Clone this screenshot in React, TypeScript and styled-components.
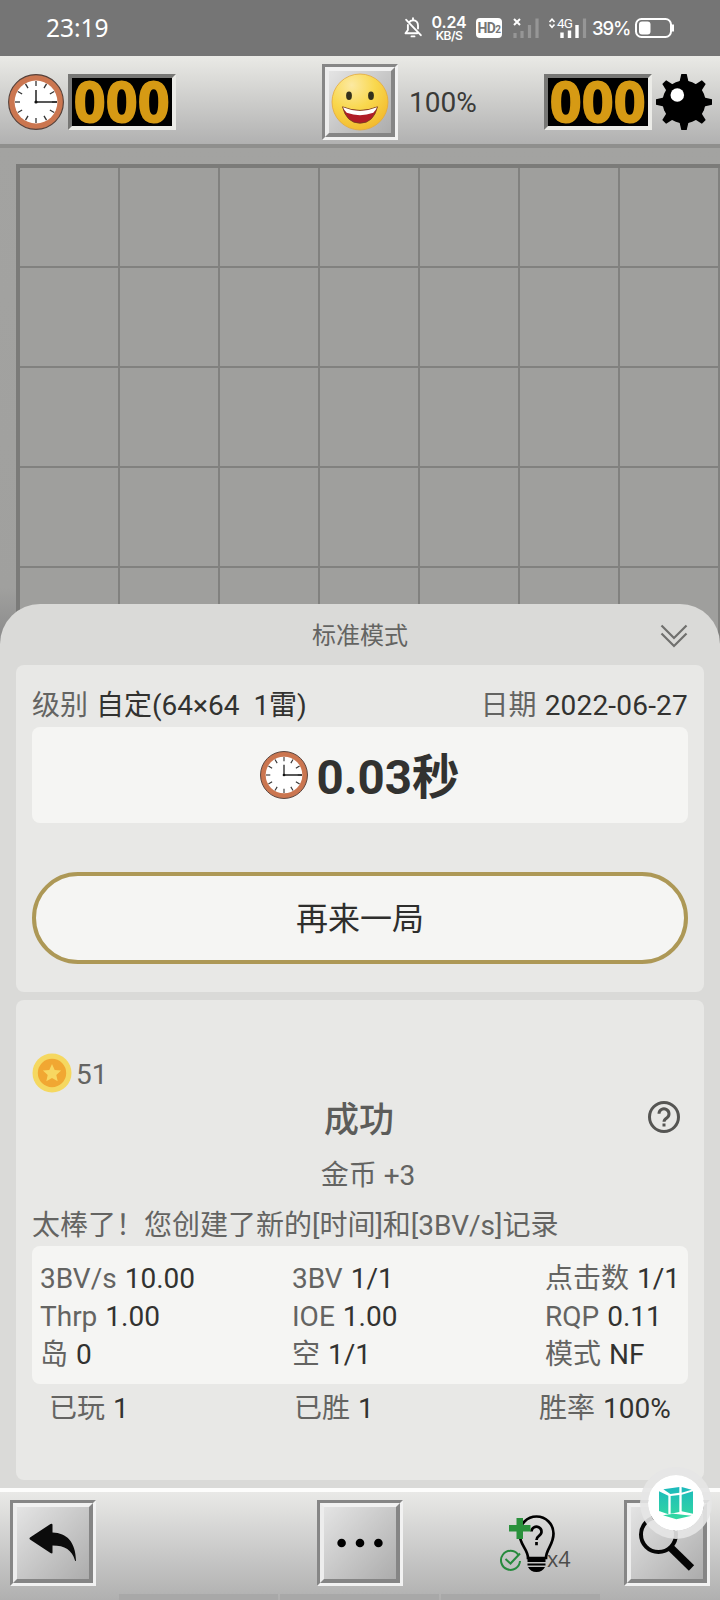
import React from 'react';
import styled, { createGlobalStyle } from 'styled-components';

const Global = createGlobalStyle`
  * { box-sizing: border-box; }
  body { margin: 0; background: #dadad8; }
`;

const Screen = styled.div`
  width: 720px; height: 1600px; overflow: hidden;
  display: flex; flex-direction: column;
  font-family: Roboto, "Noto Sans CJK SC", sans-serif;
  font-size: 28px; color: #323230;
`;

/* ---------- status bar ---------- */
const StatusBar = styled.header`
  height: 56px; flex: none; background: #757575; color: #fff;
  display: flex; align-items: center; padding: 0 45px 0 46px;
`;
const StatusClock = styled.span`
  flex: 1; font: 400 24.5px/56px "Noto Sans", sans-serif;
`;
const StatusIcons = styled.div`
  display: flex; align-items: center; height: 56px;
`;
const NetSpeed = styled.div`
  width: 36px; margin: 0 9px 0 9px; text-align: center; font-family: Inter, sans-serif; font-weight: 600;
  display: flex; flex-direction: column; gap: 1px;
`;
const SpeedValue = styled.div`
  font-size: 16px; line-height: 15px; height: 14px; letter-spacing: -0.2px;
`;
const SpeedUnit = styled.div`
  font-size: 12px; line-height: 12px; letter-spacing: -0.5px;
`;
const HdBadge = styled.div`
  width: 26px; height: 20px; border-radius: 4px; background: #fff; color: #757575;
  font: 700 14px/21px "Roboto", sans-serif; letter-spacing: -0.6px; text-align: center;
  margin-right: 11px;
  small { font-size: 10px; }
`;
const Percent = styled.span`
  font: 500 18.5px/54px Inter, sans-serif; letter-spacing: -1.1px; width: 37px; margin: 0 6px 0 5px;
`;

/* ---------- top game bar ---------- */
const GameBar = styled.div`
  height: 92px; flex: none; border-bottom: 4px solid #8f8f8d;
  background: linear-gradient(#eaeae6, #b1b1b1);
  display: grid; grid-template-columns: 1fr 76px 1fr; align-items: center; padding: 4px 8px 0;
`;
const BarSide = styled.div<{ $end?: boolean }>`
  display: flex; align-items: center; gap: 4px; height: 56px;
  justify-content: ${p => (p.$end ? 'space-between' : 'flex-start')};
`;
const CounterGroup = styled.div`
  display: flex; gap: 4px;
`;
const Led = styled.div`
  width: 108px; height: 56px; border: 4px solid; border-color: #777775 #ebebe7 #ebebe7 #777775;
  background: #000; color: #d69a14; text-align: center;
  font: 700 55px/45px "Noto Sans", sans-serif; letter-spacing: 0.5px;
  -webkit-text-stroke: 1.8px #d69a14;
`;
const Progress = styled.span`
  margin-left: 11px; line-height: 57px; color: #3a3a38;
`;

/* ---------- beveled button ---------- */
const BevelOuter = styled.button<{ $size: number }>`
  width: ${p => p.$size}px; height: ${p => p.$size}px; padding: 0; flex: none;
  border: 3px solid; border-color: #868686 #f2f2f2 #f2f2f2 #868686; background: none;
  display: flex;
`;
const BevelInner = styled.span`
  flex: 1; border: 4px solid; border-color: #f1f1f1 #858585 #858585 #ededed;
  background: linear-gradient(135deg, #e4e4e4, #acacac);
  display: flex; align-items: center; justify-content: center;
  svg { flex: none; }
`;

/* ---------- board and result sheet ---------- */
const Stage = styled.main`
  flex: 1; position: relative; overflow: hidden; padding: 16px 0 0 16px;
  background: linear-gradient(#a3a3a1 0, #a0a09e 440px, #8c8c8c 490px);
`;
const Board = styled.div`
  width: 704px; border: solid #7b7b79; border-width: 4px 0 0 4px;
  display: grid; grid-template-columns: repeat(7, 100px); grid-auto-rows: 100px;
`;
const Cell = styled.div`
  border: solid #81817f; border-width: 0 2px 2px 0; background: #9f9f9d;
`;
const Sheet = styled.section`
  position: absolute; left: 0; right: 0; top: 456px; bottom: 0;
  background: #dadad8; border-radius: 40px 40px 0 0; padding: 0 16px 8px;
  display: flex; flex-direction: column;
`;
const SheetHeader = styled.div`
  height: 61px; flex: none; display: grid; grid-template-columns: 1fr auto 1fr; align-items: center;
  font-size: 24px; line-height: 36px; color: #646462; padding: 2px 16px 0;
  svg { justify-self: end; }
`;
const Card = styled.div<{ $height: number; $top: number }>`
  height: ${p => p.$height}px; padding: ${p => p.$top}px 16px 0; border-radius: 8px; background: #e8e8e6;
  display: flex; flex-direction: column; flex: none;
  & + & { margin-top: 8px; }
`;
const InfoRow = styled.div`
  display: flex; justify-content: space-between; line-height: 41px; white-space: pre; padding-bottom: 1px;
`;
const DateText = styled.span`
  letter-spacing: 0.2px;
`;
const Label = styled.span`
  color: #646462; margin-right: 8px;
`;
const Panel = styled.div<{ $height: number }>`
  height: ${p => p.$height}px; flex: none; background: #f5f5f3; border-radius: 8px;
`;
const TimePanel = styled(Panel)`
  display: flex; align-items: center; justify-content: center; gap: 8px;
  font-size: 47.5px; font-weight: 700; line-height: 96px;
`;
const TimeText = styled.span`
  padding-top: 6px;
`;
const AgainButton = styled.button`
  height: 92px; margin-top: 49px; border: 4px solid #ad9856; border-radius: 46px;
  background: #f5f5f3; color: #2e2e2c; font: 32px/84px Roboto, "Noto Sans CJK SC", sans-serif; padding: 1px 0 0;
`;
const Coins = styled.div`
  display: flex; align-items: center; gap: 4px; height: 40px; color: #646462; line-height: 40px;
  span { padding-top: 3px; }
`;
const ResultRow = styled.div`
  height: 56px; display: grid; grid-template-columns: 1fr auto 1fr; align-items: center;
  color: #5c5c5a;
  svg { justify-self: end; margin: 0 8px 8px 0; }
`;
const ResultTitle = styled.h1`
  margin: 0 2px 0 0; font-size: 35px; font-weight: 500; line-height: 56px;
`;
const Reward = styled.div`
  text-align: center; line-height: 48px; padding: 3px 0 0 16px; color: #646462;
`;
const Message = styled.p`
  margin: 0; height: 46px; line-height: 52px; color: #646462; white-space: nowrap;
`;
const Stats = styled(Panel)`
  display: grid; grid-template-columns: 252px 253px 1fr; grid-auto-rows: 38px; line-height: 38px;
  padding: 14px 0 0 8px; white-space: nowrap;
`;
const Totals = styled.div`
  display: grid; grid-template-columns: 245px 245px 1fr; line-height: 50px; padding-left: 17px; white-space: nowrap;
`;

/* ---------- bottom bar ---------- */
const BottomBar = styled.footer`
  height: 112px; flex: none; border-top: 4px solid #fdfdfc; position: relative;
  background: linear-gradient(#e9e9e7, #b0b0b0); padding: 8px 10px 0;
  display: grid; grid-template-columns: 1fr 86px 1fr; align-items: start;
`;
const BottomEnd = styled.div`
  display: flex; justify-content: space-between; padding-left: 97px;
`;
const HintButton = styled.div`
  display: flex; align-items: flex-end; height: 73px; color: #4c4c4a;
`;
const HintCount = styled.span`
  font: 21.5px/29px "Open Sans", sans-serif; margin-left: -9px;
`;
const NavStrip = styled.div`
  position: absolute; left: 119px; bottom: 0; display: flex; gap: 2px;
  span { width: 159px; height: 6px; background: #a8a8a8; }
`;
const Bubble = styled.div`
  position: absolute; left: 640px; top: -25px; width: 72px; height: 72px; border-radius: 50%;
  border: 8px solid rgba(229, 229, 229, 0.9); background: #fff; background-clip: padding-box;
  display: flex; align-items: center; justify-content: center;
`;

const ClockIcon = ({ size }: { size: number }) => (
  <svg width={size} height={size} viewBox="0 0 56 56">
    <circle cx="28" cy="28" r="27.4" fill="#cb7650" stroke="#55413a" strokeWidth="1.1" />
    <circle cx="28" cy="28" r="21.4" fill="#fff" />
    {Array.from({ length: 12 }, (_, i) => (
      <path key={i} d="M28 7v5" stroke="#333" strokeWidth="1.3" transform={`rotate(${i * 30} 28 28)`} />
    ))}
    <path d="M28 28V16M28 28h21" stroke="#222" strokeWidth="1.5" />
    <circle cx="28" cy="28" r="1.6" fill="#111" />
  </svg>
);

const MineIcon = () => (
  <svg width="56" height="56" viewBox="0 0 56 56">
    <circle cx="28" cy="28" r="21.5" />
    {Array.from({ length: 8 }, (_, i) => (
      <path key={i} d="M25.3 0h5.4L33 10H23z" transform={`rotate(${i * 45} 28 28)`} />
    ))}
    <circle cx="21.3" cy="21" r="6.8" fill="#fff" />
  </svg>
);

const SmileIcon = () => (
  <svg width="58" height="58" viewBox="0 0 58 58">
    <defs>
      <radialGradient id="face" cx="0.35" cy="0.2" r="0.85">
        <stop offset="0" stopColor="#fce9a2" />
        <stop offset="0.5" stopColor="#f9d84e" />
        <stop offset="1" stopColor="#f2b92c" />
      </radialGradient>
    </defs>
    <circle cx="29" cy="29" r="28" fill="url(#face)" stroke="#e6a93a" strokeWidth="0.8" />
    <ellipse cx="18" cy="22.7" rx="2.9" ry="4.2" fill="#33301c" />
    <ellipse cx="40" cy="22.7" rx="2.9" ry="4.2" fill="#33301c" />
    <path d="M11.500 33.800Q29 41 46.500 33.800Q42.500 50.200 29 50.200T11.500 33.800Z" fill="#b01c26" stroke="#70401f" strokeWidth="0.8" />
    <path d="M12 34.300Q29 41.500 46 34.300Q44.800 37.500 42.300 39.800Q29 44.500 15.700 39.800Q13.200 37.500 12 34.300Z" fill="#fff" />
  </svg>
);

const MutedBell = () => (
  <svg width="18" height="22" viewBox="0 0 18 22" fill="none" stroke="#fff" strokeWidth="1.9" strokeLinecap="round" strokeLinejoin="round">
    <path d="M5 5.5C6 3.8 7.300 3.200 9 3.200c3 0 5 2.200 5 5.200v3.200M3.900 8v5L1.500 16.200h11.800M9 1.200v1.600M7.500 19.400h3M2.200 2.800L16.800 18.200" />
  </svg>
);

const WeakSignal = () => (
  <svg width="26" height="22" viewBox="0 0 26 22">
    <path d="M1 2l6 6M7 2L1 8" stroke="#fff" strokeWidth="2" />
    <path d="M2 16v5M9 14v7M16.500 8v13M24 1.500v19.500" stroke="#969696" strokeWidth="3.200" />
  </svg>
);

const FourG = styled.div`
  display: flex; position: relative; width: 39px; height: 22px; margin-left: 9px;
`;
const FourGText = styled.span`
  position: absolute; left: 9px; top: -1px; font: 400 13.5px/14px Roboto, sans-serif; letter-spacing: -0.8px;
`;

const DataSignal = () => (
  <FourG>
    <svg width="39" height="22" viewBox="0 0 39 22">
      <path d="M1.500 5L4 2.200 6.500 5M1.500 7.500L4 10.300 6.500 7.500" stroke="#fff" strokeWidth="1.600" fill="none" />
      <path d="M14 15.500v5.500M21.500 13.500v7.500M29 8v13" stroke="#fff" strokeWidth="3.400" />
      <path d="M36.500 1.500v19.500" stroke="#969696" strokeWidth="3.200" />
    </svg>
    <FourGText>4G</FourGText>
  </FourG>
);

const Battery = () => (
  <svg width="40" height="20" viewBox="0 0 40 20">
    <rect x="1" y="1" width="35" height="18" rx="5.500" fill="none" stroke="#fff" strokeWidth="2" />
    <rect x="4" y="3.500" width="11.500" height="13" rx="3" fill="#fff" />
    <path d="M38 6.500v7" stroke="#fff" strokeWidth="2" />
  </svg>
);

const CollapseIcon = () => (
  <svg width="28" height="24" viewBox="0 0 28 24" fill="none" stroke="#70706e" strokeWidth="2.200">
    <path d="M1.500 1.500L14 14 26.500 1.500M1.500 9.500L14 22 26.500 9.500" />
  </svg>
);

const CoinIcon = () => (
  <svg width="40" height="40" viewBox="0 0 40 40">
    <circle cx="20" cy="20" r="19.500" fill="#f5d860" />
    <circle cx="20" cy="20" r="14.200" fill="#f1a732" />
    <path d="M20 11l2.700 5.900 6.400.7-4.800 4.300 1.400 6.400L20 25l-5.700 3.300 1.400-6.400-4.800-4.300 6.400-.7z" fill="#f8d761" />
  </svg>
);

const HelpIcon = () => (
  <svg width="32" height="32" viewBox="0 0 32 32" fill="none" stroke="#555553" strokeWidth="3">
    <circle cx="16" cy="16" r="14.500" />
    <path d="M11 12.800a5 5 0 1 1 8 4c-2.200 1.500-3 2.200-3 4M16 22.500v3" />
  </svg>
);

const BackIcon = () => (
  <svg width="48" height="40" viewBox="0 0 48 40">
    <path d="M1 16.500Q0 15.500 1 14.500L21.500 1Q23.500 0 23.500 2V9.500C38 10 46.500 19 47 37.500Q46.500 38.500 46 37.500C43 27 36 22.500 23.500 22.500V29.500Q23.500 31 21.500 30Z" fill="#0b0b0b" />
  </svg>
);

const MoreIcon = () => (
  <svg width="46" height="10" viewBox="0 0 46 10">
    <circle cx="4.600" cy="5" r="4.300" /><circle cx="23" cy="5" r="4.300" /><circle cx="41.400" cy="5" r="4.300" />
  </svg>
);

const HintIcon = () => (
  <svg width="56" height="58" viewBox="0 0 56 58">
    <path d="M28 43C28 34 19.500 30 19.500 18.500A17 17 0 0 1 53.500 18.500C53.500 30 46 34 46 43Z" fill="none" stroke="#000" strokeWidth="2.700" />
    <path d="M31.500 16.500a5 4.800 0 1 1 8 3.900c-2 1.500-3 2.600-3 4.600M36.500 27v3.200" fill="none" stroke="#000" strokeWidth="2.700" />
    <path d="M27.500 43h18v4h-18zM27.500 48.500h18v2h-18zM28 52h17q-2.500 5-8.500 5t-8.500-5z" />
    <path d="M16.500 3h6.500v7h7.500v6.500H23V24h-6.500v-7.500H9V10h7.500z" fill="#2a913c" />
    <path d="M18 39.500A9.500 9.500 0 1 0 20 46M5.500 44l5 4.500L20 38.500" fill="none" stroke="#278a3d" strokeWidth="2" />
  </svg>
);

const SearchIcon = () => (
  <svg width="58" height="58" viewBox="0 0 58 58" fill="none" stroke="#050505">
    <circle cx="20.500" cy="20.500" r="17.500" strokeWidth="4" />
    <path d="M32 33L53.500 54" strokeWidth="7.500" />
  </svg>
);

const CubeIcon = () => (
  <svg width="36" height="34" viewBox="87 66 108 102">
    <defs>
      <linearGradient id="cube" gradientUnits="userSpaceOnUse" x1="0" y1="68" x2="0" y2="166">
        <stop offset="0" stopColor="#1cb9bd" /><stop offset="1" stopColor="#33d9a0" />
      </linearGradient>
    </defs>
    <path
      fill="url(#cube)"
      d="M90 82L118 95V151L90 141ZM125 96L151 93V144L125 149ZM158 92L192 82V149L158 142ZM103 76L151 69V86L124 90ZM158 69L188 77L158 86ZM102 154L134 149L188 155L142 166Z"
    />
  </svg>
);

const STATS: [string, string][] = [
  ['3BV/s', '10.00'], ['3BV', '1/1'], ['点击数', '1/1'],
  ['Thrp', '1.00'], ['IOE', '1.00'], ['RQP', '0.11'],
  ['岛', '0'], ['空', '1/1'], ['模式', 'NF'],
];
const TOTALS: [string, string][] = [['已玩', '1'], ['已胜', '1'], ['胜率', '100%']];

const Pair = ({ label, value }: { label: string; value: React.ReactNode }) => (
  <div><Label>{label}</Label>{value}</div>
);

export default function App() {
  return (
    <Screen>
      <Global />
      <StatusBar>
        <StatusClock>23:19</StatusClock>
        <StatusIcons>
          <MutedBell />
          <NetSpeed><SpeedValue>0.24</SpeedValue><SpeedUnit>KB/S</SpeedUnit></NetSpeed>
          <HdBadge>HD<small>2</small></HdBadge>
          <WeakSignal />
          <DataSignal />
          <Percent>39%</Percent>
          <Battery />
        </StatusIcons>
      </StatusBar>

      <GameBar>
        <BarSide><ClockIcon size={56} /><Led>000</Led></BarSide>
        <BevelOuter $size={76}><BevelInner><SmileIcon /></BevelInner></BevelOuter>
        <BarSide $end>
          <Progress>100%</Progress>
          <CounterGroup><Led>000</Led><MineIcon /></CounterGroup>
        </BarSide>
      </GameBar>

      <Stage>
        <Board>{Array.from({ length: 35 }, (_, i) => <Cell key={i} />)}</Board>
        <Sheet>
          <SheetHeader><span /><span>标准模式</span><CollapseIcon /></SheetHeader>
          <Card $height={327} $top={20}>
            <InfoRow>
              <Pair label="级别" value="自定(64×64  1雷)" />
              <Pair label="日期" value={<DateText>2022-06-27</DateText>} />
            </InfoRow>
            <TimePanel $height={96}><ClockIcon size={48} /><TimeText>0.03秒</TimeText></TimePanel>
            <AgainButton>再来一局</AgainButton>
          </Card>
          <Card $height={480} $top={53}>
            <Coins><CoinIcon /><span>51</span></Coins>
            <ResultRow><span /><ResultTitle>成功</ResultTitle><HelpIcon /></ResultRow>
            <Reward>金币 +3</Reward>
            <Message>太棒了！您创建了新的[时间]和[3BV/s]记录</Message>
            <Stats $height={138}>{STATS.map(([l, v]) => <Pair key={l} label={l} value={v} />)}</Stats>
            <Totals>{TOTALS.map(([l, v]) => <Pair key={l} label={l} value={v} />)}</Totals>
          </Card>
        </Sheet>
      </Stage>

      <BottomBar>
        <BevelOuter $size={86}><BevelInner><BackIcon /></BevelInner></BevelOuter>
        <BevelOuter $size={86}><BevelInner><MoreIcon /></BevelInner></BevelOuter>
        <BottomEnd>
          <HintButton><HintIcon /><HintCount>x4</HintCount></HintButton>
          <BevelOuter $size={86}><BevelInner><SearchIcon /></BevelInner></BevelOuter>
        </BottomEnd>
        <NavStrip><span /><span /><span /></NavStrip>
        <Bubble><CubeIcon /></Bubble>
      </BottomBar>
    </Screen>
  );
}
